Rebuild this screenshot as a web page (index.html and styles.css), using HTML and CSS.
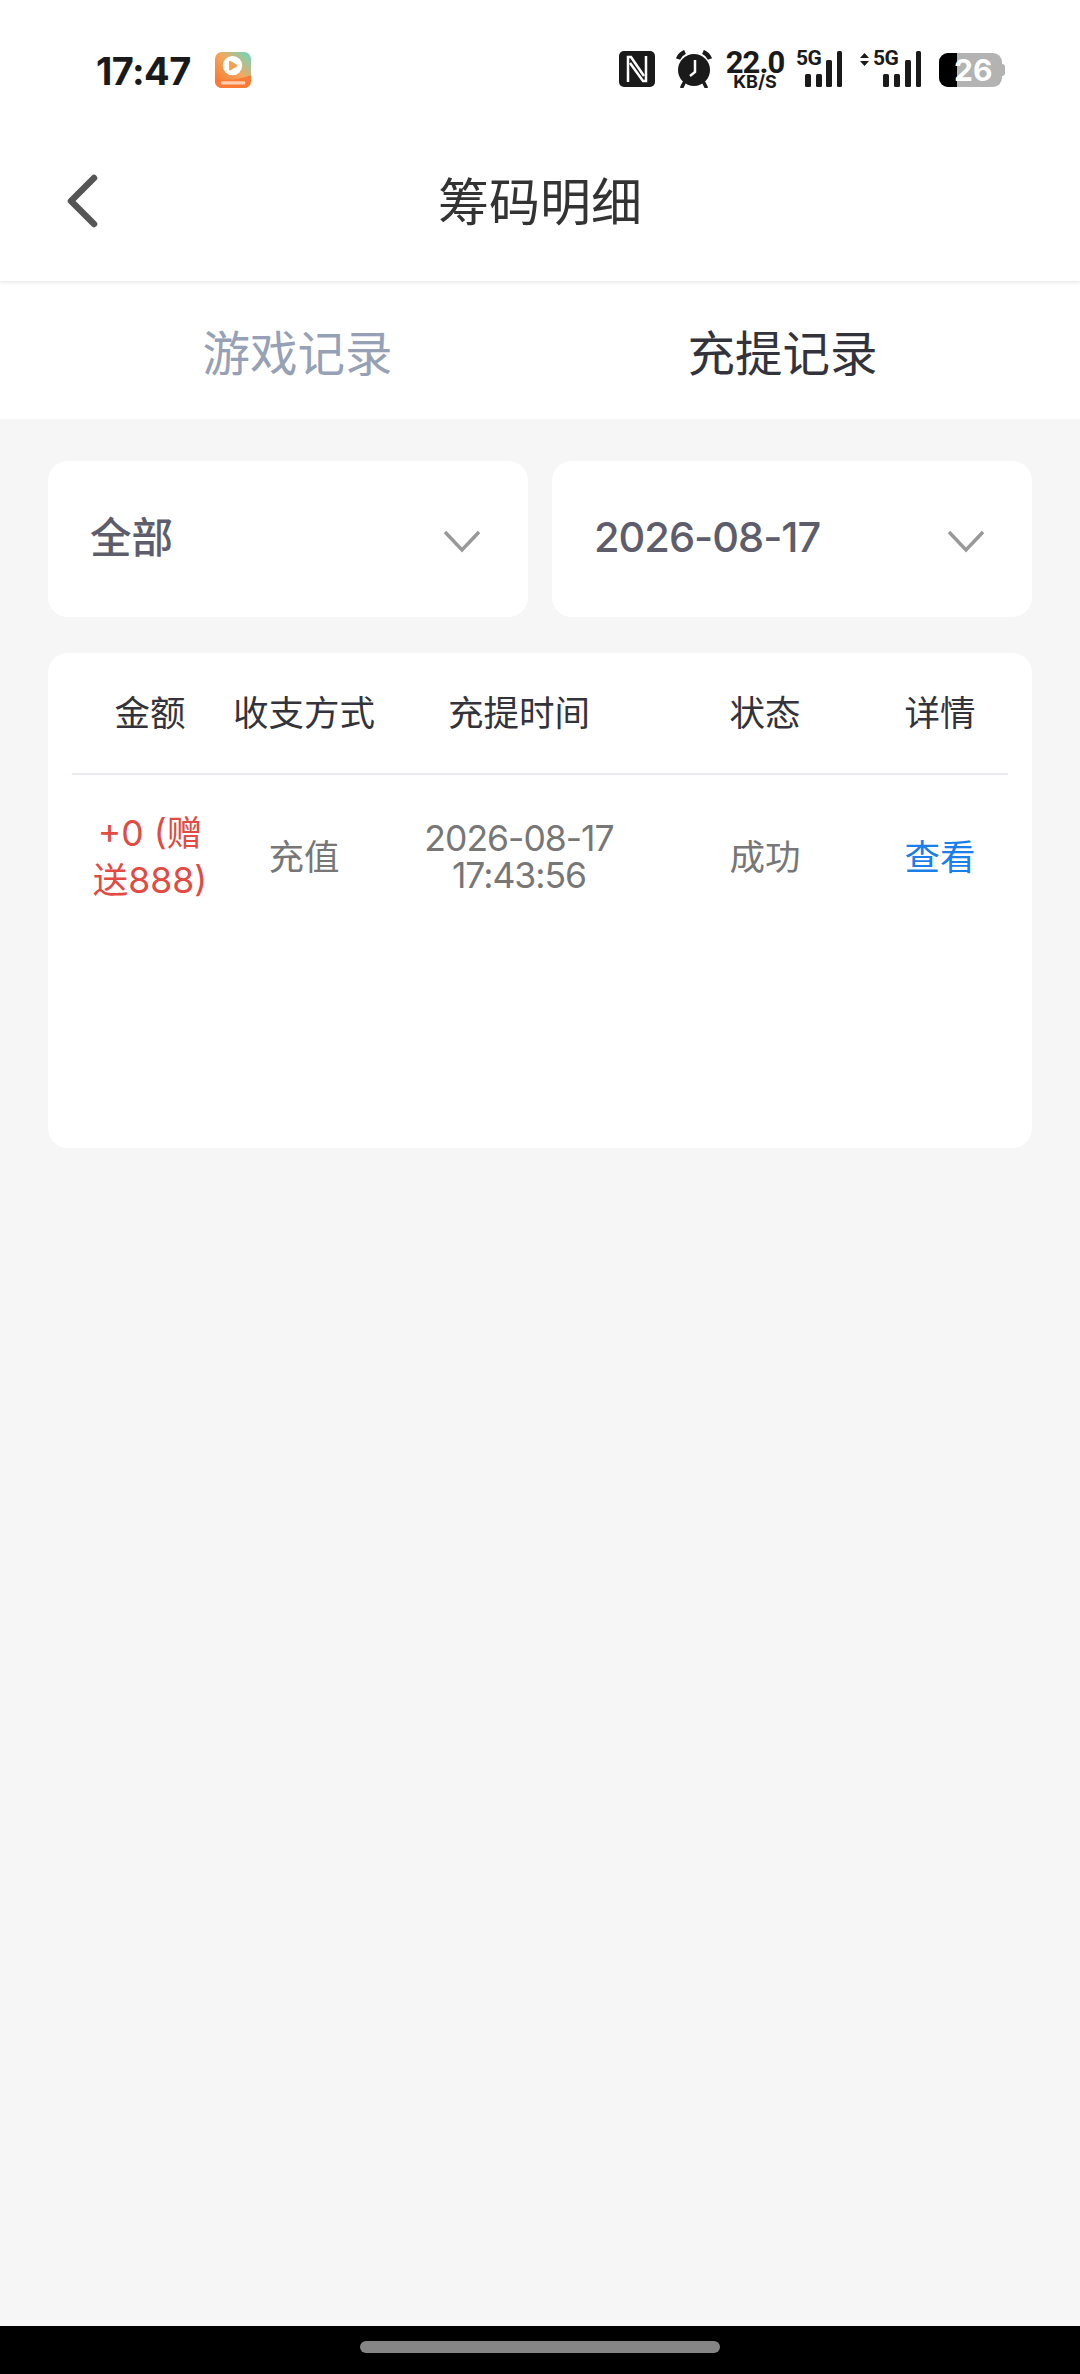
FILE: index.html
```html
<!DOCTYPE html>
<html lang="zh-CN">
<head>
<meta charset="utf-8">
<title>筹码明细</title>
<link rel="stylesheet" href="styles.css">
</head>
<body>
<div class="phone">
  <div class="statusbar">
    <span class="clock">17:47</span>
    <svg class="appicon" width="36" height="36" viewBox="0 0 37 37">
      <defs>
        <linearGradient id="ag" x1="0" y1="1" x2="1" y2="0">
          <stop offset="0" stop-color="#f96f22"/><stop offset="0.55" stop-color="#f3a860"/><stop offset="1" stop-color="#5fdcc6"/>
        </linearGradient>
      </defs>
      <rect width="37" height="37" rx="7" fill="url(#ag)"/>
      <path d="M0 28Q18 31 37 24V30a7 7 0 0 1-7 7H7a7 7 0 0 1-7-7Z" fill="#fb7a36"/>
      <circle cx="18" cy="14" r="10" fill="#fff"/>
      <path d="M15.500 10 22 14 15.500 18Z" fill="#f5a04f" stroke="#f5a04f" stroke-width="2" stroke-linejoin="round"/>
      <rect x="6" y="30" width="25" height="3.500" rx="1" fill="#ffcdb0"/>
    </svg>
    <div class="indicators">
      <svg class="nfc" width="36" height="36" viewBox="0 0 36 36">
        <rect width="36" height="36" rx="5" fill="#1a1a1a"/>
        <path d="M9 31V6h3L25 25" fill="none" stroke="#fff" stroke-width="2.500"/>
        <path d="M27 5V30h-3L11 12" fill="none" stroke="#fff" stroke-width="2.500"/>
      </svg>
      <svg class="alarm" width="38" height="38" viewBox="0 0 38 38">
        <circle cx="19" cy="20" r="16" fill="#1a1a1a"/>
        <path d="M3 9Q5 4 10 2M35 9Q33 4 28 2" fill="none" stroke="#1a1a1a" stroke-width="4.500"/>
        <path d="M9 33 7 37M29 33l2 4" stroke="#1a1a1a" stroke-width="3.500" stroke-linecap="round"/>
        <path d="M20 10V22L15 26" fill="none" stroke="#fff" stroke-width="2.500"/>
      </svg>
      <div class="speed"><span class="speed-num">22.0</span><span class="speed-unit">KB/S</span></div>
      <div class="sig sig-one">
        <span class="fiveg">5G</span>
        <svg width="48" height="38" viewBox="0 0 48 38">
          <rect x="10" y="24" width="6" height="13" rx="1.5" fill="#1a1a1a"/>
          <rect x="21" y="24" width="6" height="13" rx="1.5" fill="#1a1a1a"/>
          <rect x="31" y="10" width="6" height="27" rx="1.5" fill="#1a1a1a"/>
          <rect x="42" y="1" width="5" height="36" rx="1.5" fill="#1a1a1a"/>
        </svg>
      </div>
      <div class="sig sig-two">
        <span class="fiveg fiveg-two">5G</span>
        <svg width="62" height="38" viewBox="0 0 62 38">
          <path d="M0 8 4.500 3 9 8ZM0 11 4.500 16 9 11Z" fill="#1a1a1a"/>
          <rect x="23" y="24" width="6" height="13" rx="1.5" fill="#1a1a1a"/>
          <rect x="34" y="24" width="6" height="13" rx="1.5" fill="#1a1a1a"/>
          <rect x="45" y="10" width="6" height="27" rx="1.500" fill="#1a1a1a"/>
          <rect x="56" y="1" width="5" height="36" rx="1.5" fill="#1a1a1a"/>
        </svg>
      </div>
      <div class="battery">
        <div class="battery-fill"></div>
        <span class="battery-num">26</span>
        <div class="battery-nub"></div>
      </div>
    </div>
  </div>

  <header class="navbar">
    <svg class="back" width="34" height="58" viewBox="0 0 34 58">
      <path d="M29 6 6 29 29 52" fill="none" stroke="#555" stroke-width="6.500" stroke-linecap="round" stroke-linejoin="round"/>
    </svg>
    <h1 class="title">筹码明细</h1>
  </header>

  <nav class="tabs">
    <span class="tab tab-muted">游戏记录</span>
    <span class="tab tab-active">充提记录</span>
  </nav>

  <main class="content">
    <div class="filters">
      <div class="select">
        <span class="select-text">全部</span>
        <svg class="chev" width="38" height="23" viewBox="0 0 38 23"><path d="M2 2 19 20 36 2" fill="none" stroke="#999" stroke-width="3.500"/></svg>
      </div>
      <div class="select">
        <span class="select-date">2026-08-17</span>
        <svg class="chev" width="38" height="23" viewBox="0 0 38 23"><path d="M2 2 19 20 36 2" fill="none" stroke="#999" stroke-width="3.500"/></svg>
      </div>
    </div>

    <section class="card">
      <div class="row row-head">
        <span>金额</span>
        <span>收支方式</span>
        <span>充提时间</span>
        <span>状态</span>
        <span>详情</span>
      </div>
      <div class="row row-body">
        <span class="amount">+0 (赠送888)</span>
        <span class="cell">充值</span>
        <span class="time">2026-08-17<br>17:43:56</span>
        <span class="cell">成功</span>
        <span class="cell link">查看</span>
      </div>
    </section>
  </main>

  <div class="homebar"><div class="pill"></div></div>
</div>
</body>
</html>
```
FILE: styles.css
```css
* { box-sizing: border-box; }
html, body { margin: 0; padding: 0; }
body {
  width: 1080px;
  height: 2374px;
  overflow: hidden;
  background: #f6f6f6;
  font-family: "Inter", "Noto Sans CJK SC", sans-serif;
}
.phone { width: 1080px; height: 2374px; display: flex; flex-direction: column; }

.statusbar {
  height: 126px;
  background: #fff;
  display: flex;
  align-items: flex-start;
  padding: 50px 78px 0 96px;
}
.clock { font-family: "Inter", sans-serif; font-weight: 700; font-size: 38px; line-height: 38px; color: #1a1a1a; margin-top: 2px; width: 119px; letter-spacing: -0.6px; }
.appicon { margin-top: 2px; }
.indicators { margin-left: auto; display: flex; align-items: flex-start; }
.nfc { margin-top: 1px; }
.alarm { margin-left: 20px; }
.speed { margin-left: 14px; width: 56px; display: flex; flex-direction: column; align-items: center; color: #1a1a1a; font-weight: 700; }
.speed-num { font-family: "Roboto", sans-serif; font-size: 31px; line-height: 25px; letter-spacing: -1px; white-space: nowrap; }
.speed-unit { font-size: 18px; line-height: 14px; white-space: nowrap; }
.sig { position: relative; height: 38px; }
.sig svg { display: block; }
.sig-one { margin-left: 12px; }
.sig-two { margin-left: 17px; }
.fiveg { position: absolute; left: 1px; top: 0; font-family: "Roboto", sans-serif; font-weight: 700; font-size: 21px; line-height: 17px; letter-spacing: -0.5px; color: #1a1a1a; }
.fiveg-two { left: 13px; }
.battery { position: relative; margin-left: 17px; margin-top: 3px; width: 63px; height: 34px; border-radius: 9px; background: #b3b3b3; }
.battery-fill { position: absolute; left: 0; top: 0; width: 18px; height: 34px; background: #000; border-radius: 9px 0 0 9px; }
.battery-num { position: absolute; left: 15px; top: 0; font-family: "Inter", sans-serif; font-weight: 700; font-size: 30px; line-height: 34px; color: #fff; }
.battery-nub { position: absolute; left: 63px; top: 11px; width: 3px; height: 12px; background: #b3b3b3; border-radius: 0 3px 3px 0; }

.navbar {
  height: 155px;
  background: #fff;
  display: flex;
  align-items: center;
  justify-content: center;
  position: relative;
  box-shadow: 0 2px 3px rgba(0,0,0,0.08);
  z-index: 1;
}
.back { position: absolute; left: 65px; top: 46px; }
.title { margin: 0; font-weight: 400; font-size: 51px; line-height: 60px; color: #333; transform: translateY(-1px); }

.tabs { height: 138px; background: #fff; display: flex; padding: 0 55px; }
.tab { flex: 1; display: flex; align-items: center; justify-content: center; font-size: 47.500px; }
.tab-muted { color: #97a1b5; }
.tab-active { color: #33333b; }

.content { flex: 1; padding: 42px 48px 0; display: flex; flex-direction: column; gap: 36px; }
.filters { display: flex; gap: 24px; }
.select {
  flex: 1;
  height: 156px;
  background: #fff;
  border-radius: 20px;
  display: flex;
  align-items: center;
  justify-content: space-between;
  padding: 0 47px 0 42px;
}
.select-text { font-size: 41.500px; color: #5d5d6b; font-weight: 500; transform: translateY(-4px); }
.select-date { font-size: 41.500px; letter-spacing: -1px; color: #5d5d6b; font-weight: 500; transform: translateY(-2.500px); }
.chev { margin-top: 4px; }

.card { height: 495px; background: #fff; border-radius: 20px; padding: 0 24px; }
.row { display: grid; grid-template-columns: 156px 152px 278px 214px 136px; align-items: center; text-align: center; }
.row-head { height: 122px; border-bottom: 2px solid #e8eaef; font-size: 35.500px; color: #33333b; padding-bottom: 5px; }
.row-body { height: 164px; font-size: 35.500px; color: #777; }
.cell { transform: translateY(-3px); }
.amount { color: #e24a42; line-height: 47px; padding: 0 16px; }
.time { line-height: 37px; letter-spacing: -1px; }
.link { color: #1a7fe8; }

.homebar { height: 48px; background: #000; display: flex; justify-content: center; padding-top: 15px; }
.pill { width: 360px; height: 12px; border-radius: 6px; background: #858585; }
```
